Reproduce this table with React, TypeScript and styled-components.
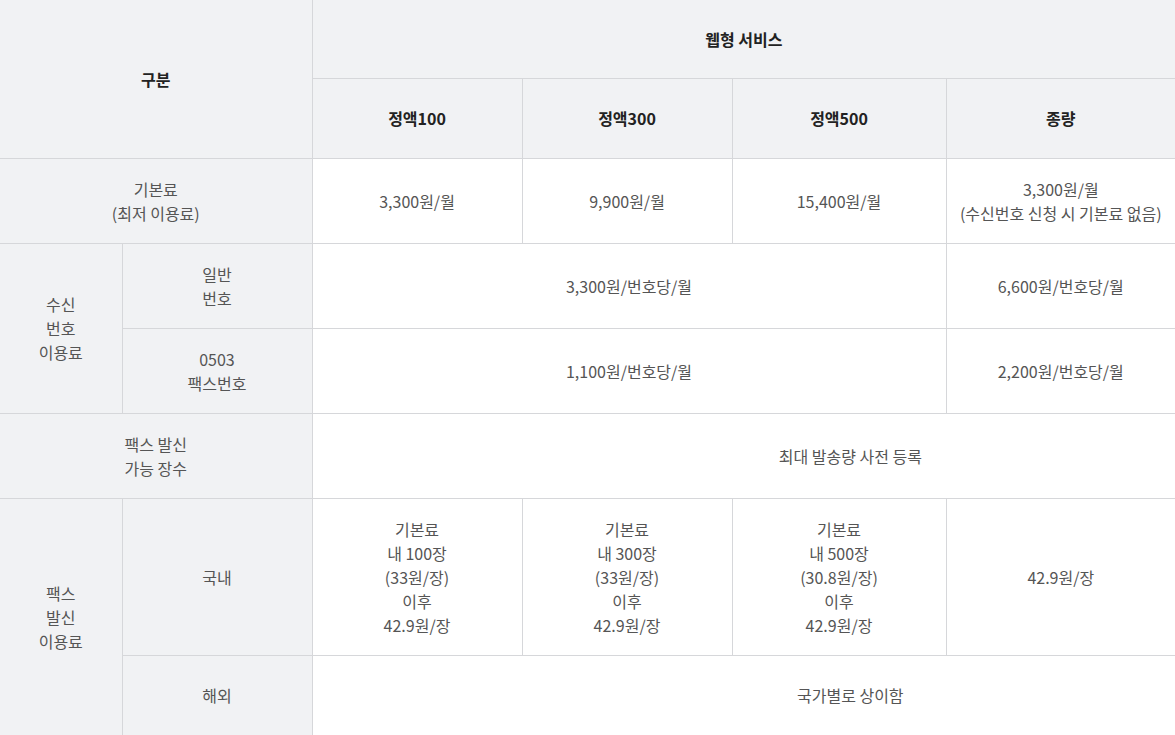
import React from 'react'
import styled, { createGlobalStyle } from 'styled-components'

const GlobalStyle = createGlobalStyle`
  html, body {
    margin: 0;
    padding: 0;
    background: #ffffff;
  }
  body {
    font-family: 'Noto Sans CJK KR', 'Noto Sans', sans-serif;
  }
`

const Table = styled.table`
  width: 1175px;
  border-collapse: collapse;
  table-layout: fixed;
  font-size: 16px;
  line-height: 24px;
`

const Row = styled.tr<{ $h: number }>`
  height: ${({ $h }) => $h}px;
`

type Kind = 'head' | 'label' | 'value'

const Cell = styled.td<{ $kind?: Kind; $last?: boolean; $shift?: number }>`
  padding: 0 4px 0 ${({ $shift }) => 4 + ($shift || 0)}px;
  text-align: center;
  vertical-align: middle;
  border-bottom: 1px solid #d6d7da;
  border-right: ${({ $last }) => ($last ? 'none' : '1px solid #d6d7da')};
  background: ${({ $kind }) => ($kind === 'value' ? '#ffffff' : '#f1f2f4')};
  color: ${({ $kind }) => ($kind === 'head' ? '#222222' : '#555555')};
  font-weight: ${({ $kind }) => ($kind === 'head' ? 700 : 400)};
`

const Lines: React.FC<{ text: string }> = ({ text }) => (
  <>
    {text.split('\n').map((l, i) => (
      <div key={i}>{l}</div>
    ))}
  </>
)

const App: React.FC = () => (
  <>
    <GlobalStyle />
    <Table>
      <colgroup>
        <col style={{ width: 122 }} />
        <col style={{ width: 190 }} />
        <col style={{ width: 210 }} />
        <col style={{ width: 210 }} />
        <col style={{ width: 214 }} />
        <col style={{ width: 229 }} />
      </colgroup>
      <tbody>
        <Row $h={78}>
          <Cell $kind="head" colSpan={2} rowSpan={2}>
            구분
          </Cell>
          <Cell $kind="head" colSpan={4} $last>
            웹형 서비스
          </Cell>
        </Row>
        <Row $h={80}>
          <Cell $kind="head">정액100</Cell>
          <Cell $kind="head">정액300</Cell>
          <Cell $kind="head">정액500</Cell>
          <Cell $kind="head" $last>
            종량
          </Cell>
        </Row>
        <Row $h={85}>
          <Cell $kind="label" colSpan={2}>
            <Lines text={'기본료\n(최저 이용료)'} />
          </Cell>
          <Cell $kind="value">3,300원/월</Cell>
          <Cell $kind="value">9,900원/월</Cell>
          <Cell $kind="value">15,400원/월</Cell>
          <Cell $kind="value" $last>
            <Lines text={'3,300원/월\n(수신번호 신청 시 기본료 없음)'} />
          </Cell>
        </Row>
        <Row $h={85}>
          <Cell $kind="label" rowSpan={2}>
            <Lines text={'수신\n번호\n이용료'} />
          </Cell>
          <Cell $kind="label">
            <Lines text={'일반\n번호'} />
          </Cell>
          <Cell $kind="value" colSpan={3}>
            3,300원/번호당/월
          </Cell>
          <Cell $kind="value" $last>
            6,600원/번호당/월
          </Cell>
        </Row>
        <Row $h={85}>
          <Cell $kind="label">
            <Lines text={'0503\n팩스번호'} />
          </Cell>
          <Cell $kind="value" colSpan={3}>
            1,100원/번호당/월
          </Cell>
          <Cell $kind="value" $last>
            2,200원/번호당/월
          </Cell>
        </Row>
        <Row $h={85}>
          <Cell $kind="label" colSpan={2}>
            <Lines text={'팩스 발신\n가능 장수'} />
          </Cell>
          <Cell $kind="value" colSpan={4} $last $shift={213}>
            최대 발송량 사전 등록
          </Cell>
        </Row>
        <Row $h={157}>
          <Cell $kind="label" rowSpan={2}>
            <Lines text={'팩스\n발신\n이용료'} />
          </Cell>
          <Cell $kind="label">국내</Cell>
          <Cell $kind="value">
            <Lines text={'기본료\n내 100장\n(33원/장)\n이후\n42.9원/장'} />
          </Cell>
          <Cell $kind="value">
            <Lines text={'기본료\n내 300장\n(33원/장)\n이후\n42.9원/장'} />
          </Cell>
          <Cell $kind="value">
            <Lines text={'기본료\n내 500장\n(30.8원/장)\n이후\n42.9원/장'} />
          </Cell>
          <Cell $kind="value" $last>
            42.9원/장
          </Cell>
        </Row>
        <Row $h={80}>
          <Cell $kind="label">해외</Cell>
          <Cell $kind="value" colSpan={4} $last $shift={213}>
            국가별로 상이함
          </Cell>
        </Row>
      </tbody>
    </Table>
  </>
)

export default App
